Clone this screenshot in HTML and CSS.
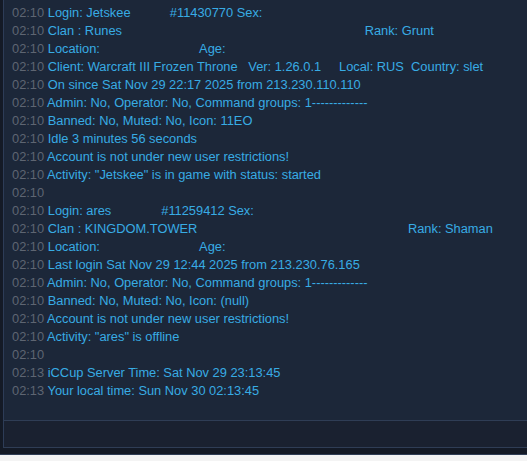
FILE: index.html
```html
<!DOCTYPE html>
<html>
<head>
<meta charset="utf-8">
<link rel="stylesheet" href="styles.css">
</head>
<body>
<div class="app">
  <div class="log">
    <div class="row"><span class="ts">02:10</span> <span class="msg">Login: Jetskee           #11430770 Sex:</span></div>
    <div class="row"><span class="ts">02:10</span> <span class="msg">Clan : Runes                                                                    Rank: Grunt</span></div>
    <div class="row"><span class="ts">02:10</span> <span class="msg">Location:                            Age:</span></div>
    <div class="row"><span class="ts">02:10</span> <span class="msg">Client: Warcraft III Frozen Throne   Ver: 1.26.0.1     Local: RUS  Country: slet</span></div>
    <div class="row"><span class="ts">02:10</span> <span class="msg">On since Sat Nov 29 22:17 2025 from 213.230.110.110</span></div>
    <div class="row"><span class="ts">02:10</span> <span class="msg">Admin: No, Operator: No, Command groups: 1-------------</span></div>
    <div class="row"><span class="ts">02:10</span> <span class="msg">Banned: No, Muted: No, Icon: 11EO</span></div>
    <div class="row"><span class="ts">02:10</span> <span class="msg">Idle 3 minutes 56 seconds</span></div>
    <div class="row"><span class="ts">02:10</span> <span class="msg">Account is not under new user restrictions!</span></div>
    <div class="row"><span class="ts">02:10</span> <span class="msg">Activity: "Jetskee" is in game with status: started</span></div>
    <div class="row"><span class="ts">02:10</span></div>
    <div class="row"><span class="ts">02:10</span> <span class="msg">Login: ares              #11259412 Sex:</span></div>
    <div class="row"><span class="ts">02:10</span> <span class="msg">Clan : KINGDOM.TOWER                                                           Rank: Shaman</span></div>
    <div class="row"><span class="ts">02:10</span> <span class="msg">Location:                            Age:</span></div>
    <div class="row"><span class="ts">02:10</span> <span class="msg">Last login Sat Nov 29 12:44 2025 from 213.230.76.165</span></div>
    <div class="row"><span class="ts">02:10</span> <span class="msg">Admin: No, Operator: No, Command groups: 1-------------</span></div>
    <div class="row"><span class="ts">02:10</span> <span class="msg">Banned: No, Muted: No, Icon: (null)</span></div>
    <div class="row"><span class="ts">02:10</span> <span class="msg">Account is not under new user restrictions!</span></div>
    <div class="row"><span class="ts">02:10</span> <span class="msg">Activity: "ares" is offline</span></div>
    <div class="row"><span class="ts">02:10</span></div>
    <div class="row"><span class="ts">02:13</span> <span class="msg">iCCup Server Time: Sat Nov 29 23:13:45</span></div>
    <div class="row"><span class="ts">02:13</span> <span class="msg">Your local time: Sun Nov 30 02:13:45</span></div>
  </div>
  <div class="input"></div>
  <div class="strip"></div>
</div>
</body>
</html>
```

FILE: styles.css
```css
html, body {
  margin: 0;
  padding: 0;
  background: #f4f4f4;
}
.app {
  width: 527px;
  height: 455px;
  background: #141a26;
  padding-left: 3px;
  box-sizing: border-box;
  display: flex;
  flex-direction: column;
  border-bottom: 1px solid #2f3d55;
}
.log {
  flex: 1;
  background: #1c2739;
  border-left: 1px solid #2d3c57;
  padding: 4px 0 0 8px;
  font-family: "Liberation Sans", Arial, sans-serif;
  font-size: 12.85px;
  line-height: 18px;
  overflow: hidden;
}
.row {
  white-space: pre;
  height: 18px;
}
.ts {
  color: #5e6572;
}
.msg {
  color: #38ace4;
}
.input {
  height: 26px;
  flex: none;
  background: #1a2130;
  border-top: 1px solid #2f3d55;
  border-bottom: 1px solid #2f3d55;
  border-left: 1px solid #2d3c57;
}
.strip {
  height: 6px;
  flex: none;
  background: #141a26;
}
```
